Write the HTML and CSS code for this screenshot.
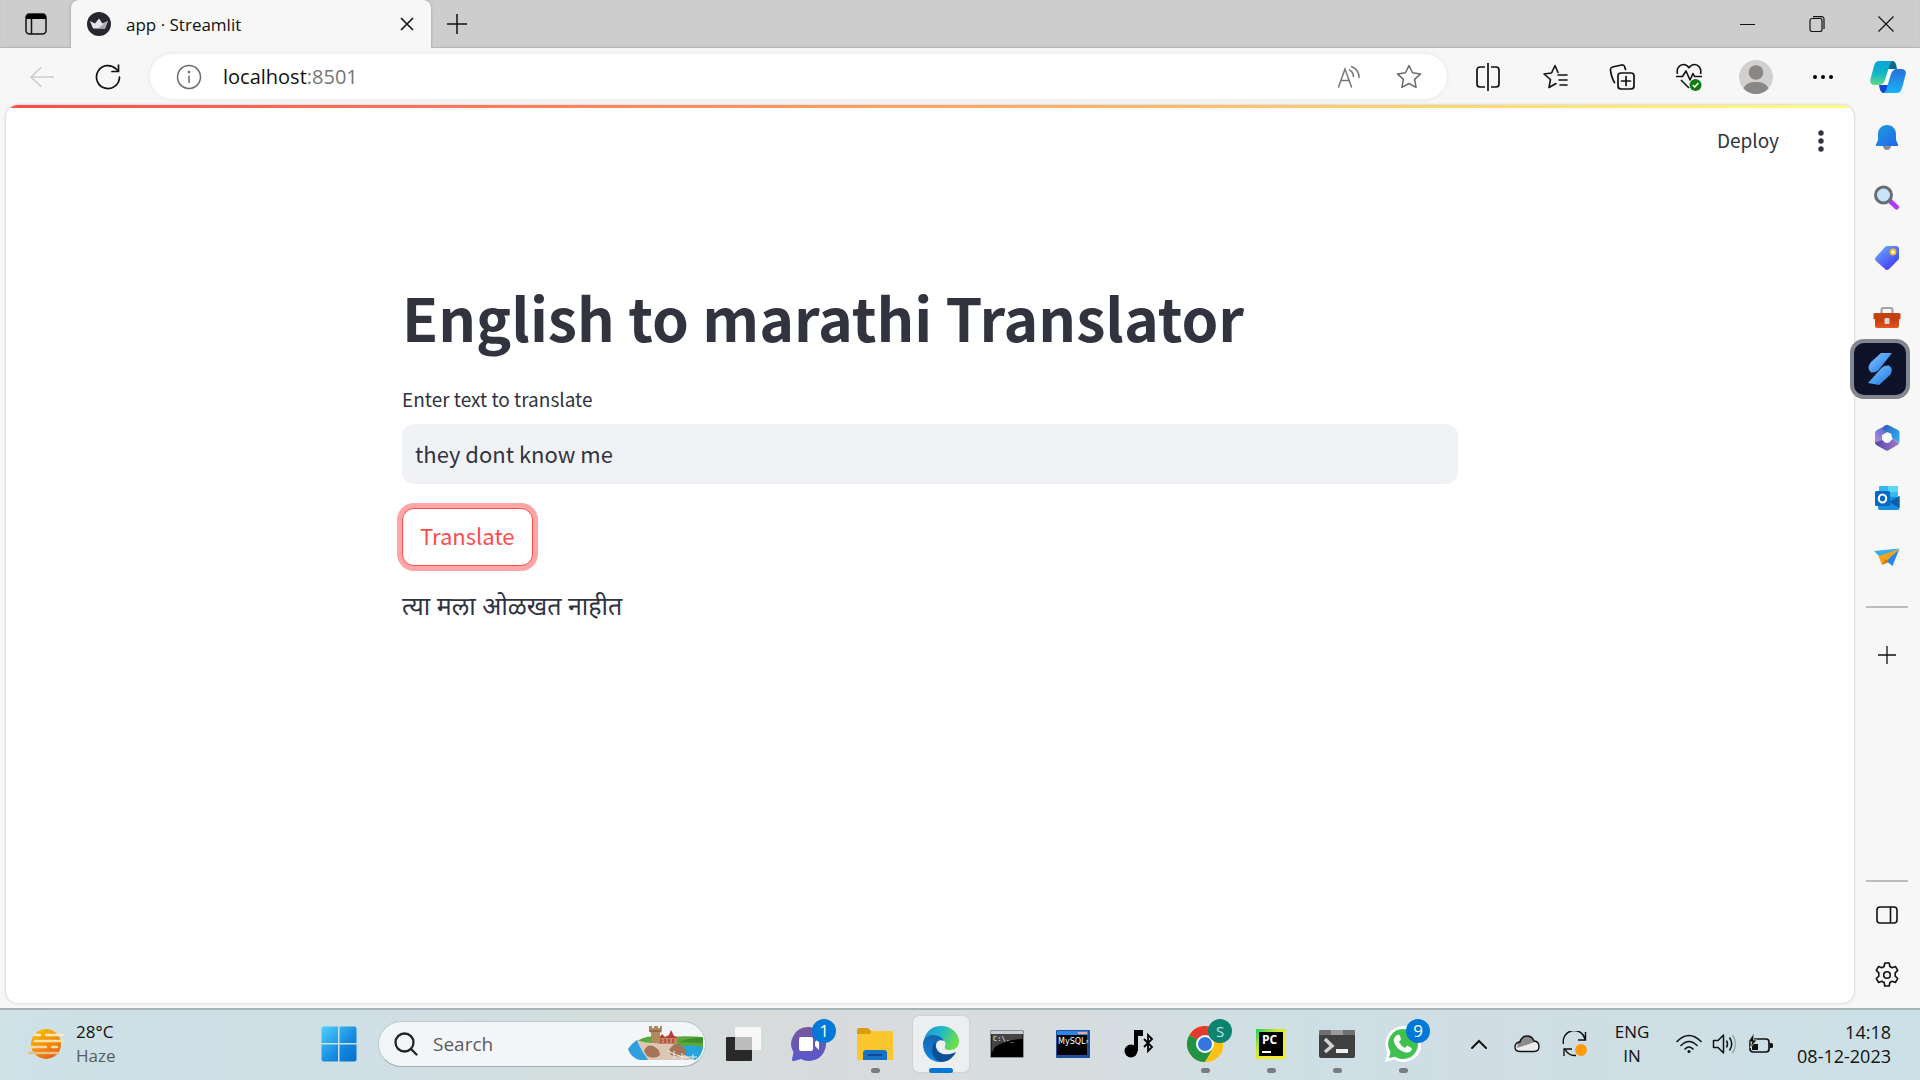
FILE: index.html
```html
<!DOCTYPE html>
<html lang="en">
<head>
<meta charset="utf-8">
<meta name="viewport" content="width=device-width, initial-scale=1">
<title>app · Streamlit</title>
<link rel="stylesheet" href="styles.css">
</head>
<body>
<div class="desktop">

  <header class="tabstrip">
    <button class="strip-btn workspaces" aria-label="Tab actions">
      <svg width="22" height="22" viewBox="0 0 22 22"><rect x="1" y="1" width="20" height="20" rx="3.500" fill="none" stroke="#111" stroke-width="1.500"/><path d="M1 6V4a3 3 0 0 1 3-3h14a3 3 0 0 1 3 3v2z" fill="#000"/><path d="M6.500 6v15" stroke="#111" stroke-width="1.500"/></svg>
    </button>
    <div class="tab">
      <svg width="24" height="24" viewBox="0 0 24 24"><circle cx="12" cy="12" r="12" fill="#262730"/><path d="M3 9l5 2.500 4-5 3.500 5L21 9l-3 7.500H6z" fill="#e4e4e6"/><path d="M6 16.500h12L20.500 9l-9 7z" fill="#a9a9ad"/></svg>
      <span class="tab-title">app · Streamlit</span>
      <button class="tab-close" aria-label="Close tab"><svg width="14" height="14" viewBox="0 0 14 14" fill="none" stroke="#111" stroke-width="1.600"><path d="M1 1l12 12M13 1L1 13"/></svg></button>
    </div>
    <button class="new-tab" aria-label="New tab"><svg width="22" height="22" viewBox="0 0 22 22" fill="none" stroke="#111" stroke-width="1.500"><path d="M11 1v20M1 11h20"/></svg></button>
    <div class="window-controls">
      <button aria-label="Minimize"><svg width="16" height="16" viewBox="0 0 16 16" stroke="#111"><path d="M0 8.500h15"/></svg></button>
      <button aria-label="Restore"><svg width="16" height="16" viewBox="0 0 16 16" fill="none" stroke="#111" stroke-width="1.200"><rect x="1" y="2.500" width="12" height="13" rx="2"/><path d="M4 .7h8.500a2.500 2.500 0 0 1 2.500 2.500V13"/></svg></button>
      <button aria-label="Close"><svg width="16" height="16" viewBox="0 0 16 16" fill="none" stroke="#111" stroke-width="1.200"><path d="M.5.500l15 15M15.500.500l-15 15"/></svg></button>
    </div>
  </header>

  <nav class="toolbar">
    <button class="nav-btn" aria-label="Back"><svg width="26" height="24" viewBox="0 0 26 24" fill="none" stroke="#cdcdcd" stroke-width="1.600"><path d="M25 12H2M12.500 2L2 12l10.500 10"/></svg></button>
    <button class="nav-btn" aria-label="Refresh"><svg width="26" height="26" viewBox="0 0 26 26" fill="none" stroke="#111" stroke-width="1.700" stroke-linecap="round"><path d="M24.500 13A11.500 11.500 0 1 1 21 4.800L23 7"/><path d="M23.500 1v6.500H17"/></svg></button>
    <div class="address">
      <svg width="26" height="26" viewBox="0 0 26 26" fill="none" stroke="#6b6b6b" stroke-width="1.500"><circle cx="13" cy="13" r="11.500"/><path d="M13 11.500V19"/><circle cx="13" cy="8" r=".6" fill="#6b6b6b"/></svg>
      <a class="url" href="#">localhost<span class="port">:8501</span></a>
      <button class="addr-btn" aria-label="Read aloud"><svg width="24" height="24" viewBox="0 0 24 24" fill="none" stroke="#777" stroke-width="1.500" stroke-linecap="round"><path d="M1.500 22L8 4l6.500 18M4 15.500h8M12.500 5c2.500 1.200 3.800 3.500 4 6.500M14.500 1.500c4.500 1.800 7.500 6 7.500 11"/></svg></button>
      <button class="addr-btn" aria-label="Favorite"><svg width="26" height="26" viewBox="0 0 26 26" fill="none" stroke="#6b6b6b" stroke-width="1.500" stroke-linejoin="round"><path d="M13 1.500l3.500 7.300 8 1.100-5.900 5.500 1.500 8L13 19.500l-7.100 3.900 1.500-8L1.500 9.900l8-1.100z"/></svg></button>
    </div>
    <div class="tools">
      <button aria-label="Split screen"><svg width="24" height="28" viewBox="0 0 24 28" fill="none" stroke="#111" stroke-width="1.700"><path d="M9 4H4a3 3 0 0 0-3 3v14a3 3 0 0 0 3 3h5M15 4h5a3 3 0 0 1 3 3v14a3 3 0 0 1-3 3h-5M12 0v28"/></svg></button>
      <button aria-label="Favorites"><svg width="26" height="26" viewBox="0 0 26 26" fill="none" stroke="#111" stroke-width="1.600" stroke-linejoin="round" stroke-linecap="round"><path d="M14 19.500l-7 4 1.500-8L2 10l7.500-1L13 1.500 16 8.500M16 11h9M17 16h8M18 21h7"/></svg></button>
      <button aria-label="Collections"><svg width="26" height="26" viewBox="0 0 26 26" fill="none" stroke="#111" stroke-width="1.700" stroke-linecap="round"><rect x="9" y="9" width="16" height="16" rx="3"/><path d="M17 12.500v9M12.500 17h9M5.500 18.500C3.500 15.500 1.500 9 1.500 5.500c0-1.500.8-2.200 2-2.500l9-2c1.800-.3 2.800.5 3.300 2l.7 2.500"/></svg></button>
      <button aria-label="Browser essentials"><svg width="26" height="28" viewBox="0 0 26 28" fill="none" stroke="#111" stroke-width="1.600" stroke-linejoin="round"><path d="M1.500 11C0 5 4 1.500 7.500 1.500c2.500 0 4 1 5.500 3.200C14.500 2.500 16 1.500 18.500 1.500 22 1.500 26 5 24.500 11M0 13.500h6.500L10 8l4 9 3-6.500 1.500 3H26M5 17l8 8"/><circle cx="19.500" cy="22" r="6" fill="#107c10" stroke="none"/><path d="M16.800 22l2 2 3.500-4" stroke="#fff"/></svg></button>
      <button aria-label="Profile"><svg width="34" height="34" viewBox="0 0 34 34"><circle cx="17" cy="17" r="17" fill="#d2d0ce"/><circle cx="17" cy="12.500" r="7.300" fill="#8a8886"/><path d="M4.500 28.500C6.500 23.500 11 22 17 22s10.500 1.500 12.500 6.500A17 17 0 0 1 17 34a17 17 0 0 1-12.500-5.500z" fill="#8a8886"/></svg></button>
      <button aria-label="Settings and more"><svg width="22" height="6" viewBox="0 0 22 6"><circle cx="3" cy="3" r="2"/><circle cx="11" cy="3" r="2"/><circle cx="19" cy="3" r="2"/></svg></button>
      <button class="copilot" aria-label="Copilot">
        <svg width="36" height="34" viewBox="0 0 36 34">
          <defs>
            <linearGradient id="cpA" x1="0" y1="0" x2="0" y2="1"><stop offset="0" stop-color="#0aa4dd"/><stop offset=".5" stop-color="#12b4c4"/><stop offset="1" stop-color="#5fd98a"/></linearGradient>
            <linearGradient id="cpB" x1="0" y1="0" x2="0" y2="1"><stop offset="0" stop-color="#2a6fd8"/><stop offset="1" stop-color="#16b4f8"/></linearGradient>
          </defs>
          <path d="M17 1h5c3 0 4 2 5 8h-9z" fill="#0b6a8e"/><path d="M19 33h-5c-3 0-4-2-5-8h9z" fill="#1746d1"/>
          <path d="M9 1h15c-3 0-4 2-5 6l-4 13c-1 3-3 5-6 5H5c-4 0-5.500-2.500-4.500-6L4 6c1-3.500 2.500-5 5-5z" fill="url(#cpA)"/>
          <path d="M27 33H12c3 0 4-2 5-6l4-13c1-3 3-5 6-5h4c4 0 5.500 2.500 4.500 6L32 28c-1 3.500-2.500 5-5 5z" fill="url(#cpB)"/>
          <path d="M19 10h4c-2 1-3 3-3.500 5L17 23c-.4 1.300-1.500 2-3.500 2 1-1 1.500-2 2-4z" fill="#fff"/>
        </svg>
      </button>
    </div>
  </nav>

  <div class="workspace">
    <main class="page">
      <div class="decoration"></div>
      <div class="page-bar">
        <button class="deploy">Deploy</button>
        <button class="kebab" aria-label="Main menu"><svg width="6" height="22" viewBox="0 0 6 22" fill="#31333f"><circle cx="3" cy="3" r="2.700"/><circle cx="3" cy="11" r="2.700"/><circle cx="3" cy="19" r="2.700"/></svg></button>
      </div>
      <section class="block">
        <h1>English to marathi Translator</h1>
        <label for="source">Enter text to translate</label>
        <input id="source" type="text" value="they dont know me">
        <button class="translate">Translate</button>
        <p class="result" lang="mr">त्या मला ओळखत नाहीत</p>
      </section>
    </main>

    <aside class="sidebar">
      <svg width="0" height="0" class="defs"><defs>
        <linearGradient id="blue" x1="0" y1="0" x2="1" y2="1"><stop offset="0" stop-color="#1ba0dc"/><stop offset="1" stop-color="#2563eb"/></linearGradient>
        <linearGradient id="tagG" x1="0" y1="0" x2=".7" y2="1"><stop offset="0" stop-color="#6bb5ff"/><stop offset="1" stop-color="#4338f5"/></linearGradient>
        <linearGradient id="red" x1="0" y1="0" x2="0" y2="1"><stop offset="0" stop-color="#a92d0a"/><stop offset="1" stop-color="#e8551c"/></linearGradient>
        <linearGradient id="sG" x1="0" y1="0" x2="1" y2="1"><stop offset="0" stop-color="#8cc8ff"/><stop offset="1" stop-color="#1473e6"/></linearGradient>
        <linearGradient id="m1" x1="1" y1="0" x2="0" y2="1"><stop offset="0" stop-color="#2d62c8"/><stop offset="1" stop-color="#c28be0"/></linearGradient>
        <linearGradient id="m2" x1="0" y1="0" x2="1" y2="1"><stop offset="0" stop-color="#2f5cc0"/><stop offset="1" stop-color="#30b9f0"/></linearGradient>
        <linearGradient id="m3" x1="0" y1="0" x2="1" y2="0"><stop offset="0" stop-color="#5146a8"/><stop offset="1" stop-color="#a678c8"/></linearGradient>
      </defs></svg>
      <div class="side-top">
        <button aria-label="Notifications"><svg width="24" height="26" viewBox="0 0 24 26"><path d="M8 21h8c-.5 3-2 4-4 4s-3.500-1-4-4z" fill="#8b8b8b"/><path d="M12 0c5.500 0 9 4 9 9v6l2 4.500c.3 1-.2 1.500-1 1.500H2c-.8 0-1.300-.5-1-1.500L3 15V9c0-5 3.500-9 9-9z" fill="url(#blue)"/></svg></button>
        <button aria-label="Search"><svg width="26" height="26" viewBox="0 0 26 26"><path d="M17 17l5.500 5" stroke="#b43cf0" stroke-width="5" stroke-linecap="round"/><circle cx="9.500" cy="10" r="8" fill="#c8e4fa" stroke="#6a6d6f" stroke-width="3"/></svg></button>
        <button aria-label="Shopping"><svg width="26" height="26" viewBox="0 0 26 26"><path d="M13 1h9q3 0 3 3v9q0 1-1 2l-9 9q-2 2-4 0l-9-8q-2-2 0-4l9-10q1-1 2-1z" fill="url(#tagG)"/><circle cx="19" cy="7" r="2.500" fill="#fff" stroke="#f4c020" stroke-width="1.800"/></svg></button>
        <button aria-label="Tools"><svg width="28" height="24" viewBox="0 0 28 24"><path d="M8.500 8V4q0-2 2-2h7q2 0 2 2v4" fill="none" stroke="#a0a3a6" stroke-width="2.200"/><rect x="2" y="8" width="24" height="14" rx="2" fill="url(#red)"/><path d="M.5 8.500q0-1.500 1.500-1.500h24q1.500 0 1.500 1.500V13q-6 2-13.500 2T.5 13z" fill="#c4400f"/><rect x="11.500" y="12" width="5" height="6" rx="1" fill="#d5d7d9"/></svg></button>
        <button aria-label="Microsoft 365" class="after-float"><svg width="26" height="28" viewBox="0 0 26 28"><path d="M13 1L3 6Q1 7 1 9v11l7-4v-5l9-5V3z" fill="url(#m1)"/><path d="M12 1q1-.6 2 0l10 5q1.500 1 1.500 3v10l-8-5v-4L9 6V3z" fill="url(#m2)"/><path d="M25 19q0 1-1.500 2L14 26.500q-1 .6-2 0L3 21.500Q1 20 1 18.500L8 16l5 3 6-4z" fill="url(#m3)"/><path d="M10.500 10h5l3 4-3 4.500h-5L8 14z" fill="#f7f7f7"/></svg></button>
        <button aria-label="Outlook"><svg width="26" height="26" viewBox="0 0 26 26"><rect x="5" y="1" width="19" height="15" rx="1" fill="#35b8f1"/><rect x="14" y="1" width="10" height="6" fill="#55d6fb"/><path d="M4 11l20 1 1.500-1v12q0 2-2 2H6q-2 0-2-2z" fill="#1490df"/><path d="M25.500 11v12L15 17z" fill="#0d5fa8"/><rect x="1" y="6" width="15" height="15" rx="1.500" fill="#0768c8"/><ellipse cx="8.500" cy="13.500" rx="3.700" ry="4" fill="none" stroke="#fff" stroke-width="2.200"/></svg></button>
        <button aria-label="Drop"><svg width="26" height="22" viewBox="0 0 26 22"><path d="M0 4L25.500 1.500 7 11z" fill="#35aef0"/><path d="M25.500 1.500L18.500 19 11 13z" fill="#2388ee"/><path d="M4.500 9L25.500 2 8 18z" fill="#f2a31c"/><path d="M8 18l3-6 4 3z" fill="#d77b07"/></svg></button>
        <hr>
        <button aria-label="Customize"><svg width="18" height="18" viewBox="0 0 18 18" stroke="#111" stroke-width="1.300"><path d="M9 0v18M0 9h18"/></svg></button>
      </div>
      <div class="side-bottom">
        <hr>
        <button aria-label="Hide sidebar"><svg width="22" height="18" viewBox="0 0 22 18" fill="none" stroke="#111" stroke-width="1.600"><rect x="1" y="1" width="20" height="16" rx="3"/><path d="M14.500 1v16"/></svg></button>
        <button aria-label="Settings"><svg width="26" height="26" viewBox="0 0 26 26" fill="none" stroke="#111" stroke-width="1.600" stroke-linejoin="round"><path d="M10.800 1h4.400l.7 3.500 2.200 1.200 3.400-1.100 2.200 3.800-2.500 2.400v3.400l2.500 2.300-2.200 3.900-3.400-1.200-2.200 1.300-.7 3.500h-4.400l-.7-3.500-2.200-1.300-3.400 1.200-2.200-3.900 2.500-2.300v-3.400L2.300 8.400l2.200-3.800 3.400 1.100 2.200-1.200z"/><circle cx="13" cy="13" r="3.300"/></svg></button>
      </div>
      <button class="floating" aria-label="Assistant"><svg width="26" height="34" viewBox="0 0 26 34"><path d="M14 1h11L12 17.500Q9 21 4 20.500-1 16 4 10z" fill="url(#sG)"/><path d="M12 33L1 31 14 16.500Q17 13 22 13.500q5 3.500 1 9.500z" fill="url(#sG)"/></svg></button>
    </aside>
  </div>

  <footer class="taskbar">
    <div class="weather">
      <svg width="36" height="32" viewBox="0 0 36 32"><defs><linearGradient id="sun" x1="0" y1="0" x2=".6" y2="1"><stop offset="0" stop-color="#ffc800"/><stop offset="1" stop-color="#e9650c"/></linearGradient></defs><circle cx="18" cy="16" r="15" fill="url(#sun)"/><g stroke-width="2.500" stroke-linecap="round"><path d="M7 7h5M18 7h17" stroke="#f7ecc8"/><path d="M7 13h28" stroke="#fbe3a8"/><path d="M1 19h17M24 19h5" stroke="#f6d9a4"/><path d="M1 25h29" stroke="#e3c08c"/></g></svg>
      <div class="weather-text"><span>28°C</span><span class="muted">Haze</span></div>
    </div>
    <button class="start" aria-label="Start"><svg width="36" height="36" viewBox="0 0 36 36"><defs><linearGradient id="win" x1="0" y1="0" x2="1" y2="1"><stop offset="0" stop-color="#4fd0ff"/><stop offset=".6" stop-color="#1489de"/><stop offset="1" stop-color="#0670cc"/></linearGradient></defs><path d="M2 .5h15V17H.5V2zM18.500.500H34L35.500 2v15h-17zM.5 18.500H17v17H2L.5 34zM18.500 18.500h17V34L34 35.500H18.500z" fill="url(#win)"/></svg></button>
    <div class="search">
      <svg width="24" height="24" viewBox="0 0 24 24" fill="none" stroke="#222" stroke-width="2.300" stroke-linecap="round"><circle cx="10.500" cy="10.500" r="9"/><path d="M17 17l5.500 5.500"/></svg>
      <input type="text" placeholder="Search" aria-label="Search">
      <svg width="76" height="36" viewBox="0 0 76 36">
        <path d="M10 15q12-7 24-3 20-3 42-1v12H34z" fill="#58a83a"/><path d="M52 16q14-5 24-4v5z" fill="#3d8f2e"/>
        <path d="M1 23q4-6 9-9 6 14 12 20H13Q4 32 1 23z" fill="#2f9fe0"/>
        <path d="M10 14q10 4 30 3l18 4q0 8 12 12l-10 1H21Q14 24 10 14z" fill="#dcc6b4"/>
        <path d="M53 21q10-3 23 0-1 9-8 13-12-3-15-13z" fill="#25a5dc"/>
        <path d="M22 3V0h3v2h2V0h4v2h2V0h2v5l-2 2v10H24V7l-2-2z" fill="#b08a5c"/><path d="M22 5h12" stroke="#6d5233"/>
        <path d="M32 12l3-4 3 3 4-2 2-5 3 6 3 1v7H32z" fill="#b83a30"/><path d="M31 12h19v6H31z" fill="#c98263"/><path d="M34 13v4M38 13v4M42 13v4M46 13v4" stroke="#8a3124"/>
        <path d="M17 25q3-7 9-5 7 3 7 9-5 5-13 1zM42 24q4-7 11-5 8 5 6 9-6 4-15 1z" fill="#a67458"/>
        <path d="M40 24l7 4 9 3h14M47 25v8M55 27v7M66 28v5" stroke="#eee" fill="none"/>
      </svg>
    </div>
    <div class="apps">
      <button aria-label="Task view"><svg width="36" height="36" viewBox="0 0 36 36"><rect x="1" y="11" width="26" height="24" rx="1" fill="#292929"/><rect x="10" y="1" width="26" height="23" rx="1" fill="#f7f7f7"/><path d="M10 11h17v13H10z" fill="#bcbcbc"/></svg></button>
      <button aria-label="Chat"><svg width="36" height="36" viewBox="0 0 36 36"><defs><linearGradient id="chat" x1="0" y1="0" x2="0" y2="1"><stop offset="0" stop-color="#7a559c"/><stop offset="1" stop-color="#5759cf"/></linearGradient></defs><path d="M18 1a17 17 0 1 1-8 32l-7 2q-2 .5-2-1.500l1.500-7A17 17 0 0 1 18 1z" fill="url(#chat)"/><rect x="8" y="11" width="14" height="14" rx="2" fill="#fff"/><path d="M24 16l4-4v12l-4-4z" fill="#fff"/></svg><span class="badge">1</span></button>
      <button aria-label="File Explorer" class="running"><svg width="36" height="34" viewBox="0 0 36 34"><path d="M0 3q0-2 2-2h9l4 4v4H0z" fill="#dd9a0a"/><path d="M0 7h12l4-3h19q1 0 1 1v28H0z" fill="#fcc62f"/><path d="M6 33v-7q0-3 3-3h18q3 0 3 3v7z" fill="#1672c4"/><path d="M11 28h14" stroke="#0d4c90" stroke-width="2"/></svg></button>
      <button aria-label="Microsoft Edge" class="active"><svg width="36" height="36" viewBox="0 0 36 36"><defs><linearGradient id="edA" x1="0" y1="0" x2="1" y2=".4"><stop offset="0" stop-color="#1a8fdb"/><stop offset=".5" stop-color="#20b8cc"/><stop offset="1" stop-color="#6bdc4a"/></linearGradient><linearGradient id="edB" x1="0" y1="0" x2="0" y2="1"><stop offset="0" stop-color="#1464b0"/><stop offset="1" stop-color="#1388e0"/></linearGradient></defs><path d="M1 15C2 6 9 0 18 0c11 0 18 8 18 15 0 6-4 9-9 9-4 0-6-1-5-4 2-3-1-8-8-8-5 0-10 1-13 3z" fill="url(#edA)"/><path d="M0 18c0-6 5-9 10-9 6 0 10 3 11 6-4-2-8 0-8 5 0 7 8 11 15 9-3 5-7 7-11 7C7 36 0 28 0 18z" fill="url(#edB)"/><path d="M13 15c-3 11 8 17 20 11-3 6-8 10-15 10-9-2-12-14-5-21z" fill="#0c4f94"/></svg></button>
      <button aria-label="Command Prompt"><svg width="34" height="28" viewBox="0 0 34 28"><rect x=".5" y=".5" width="33" height="27" rx="1" fill="#000" stroke="#8c9299"/><path d="M1 1h32v3H1z" fill="#c9ced4"/><path d="M1.500 4h31v5Q15 10 5 17l-3.500 6z" fill="#444"/><text x="3" y="11" class="cmd-text">C:\._</text></svg></button>
      <button aria-label="MySQL"><svg width="36" height="30" viewBox="0 0 36 30"><rect x="1" y="1" width="34" height="28" rx="1" fill="#1e4e9c"/><path d="M2 2h31v4H2z" fill="#2f86e8"/><path d="M23 3h9v2h-9z" fill="#e0a9a0"/><path d="M2 6h30v20H2z" fill="#000"/><text x="3" y="15" class="sql-text">MySQL›</text></svg></button>
      <button aria-label="Bluetooth audio"><svg width="30" height="30" viewBox="0 0 30 30"><circle cx="7" cy="22" r="6.500"/><path d="M10 1h9v6h-5v15h-4z"/><path d="M20 10l8 8-4 4V6l4 4-8 8" fill="none" stroke="#000" stroke-width="1.800"/></svg></button>
      <button aria-label="Chrome" class="running"><svg width="36" height="36" viewBox="0 0 36 36"><circle cx="18" cy="18" r="18" fill="#fbc116"/><path d="M18 18L2.400 9A18 18 0 0 1 33.600 9z" fill="#e33b2e"/><path d="M18 18l7.800 4.500L18 36A18 18 0 0 1 2.400 9z" fill="#229342"/><path d="M18 9.500h16.500A18 18 0 0 1 18 36l8-13z" fill="#fbc116"/><circle cx="18" cy="18" r="9" fill="#fff"/><circle cx="18" cy="18" r="7" fill="#3475e0"/></svg><span class="badge green">S</span></button>
      <button aria-label="PyCharm" class="running"><svg width="30" height="30" viewBox="0 0 30 30"><defs><linearGradient id="pc" x1="0" y1="0" x2=".6" y2=".6"><stop offset="0" stop-color="#16d05e"/><stop offset=".6" stop-color="#c5e82e"/><stop offset="1" stop-color="#f0ee2a"/></linearGradient></defs><path d="M0 0h30v30H0z" fill="url(#pc)"/><path d="M3 3h24v24H3z" fill="#000"/><text x="6" y="15" class="pc-text">PC</text><path d="M6 22h9v2H6z" fill="#fff"/></svg></button>
      <button aria-label="Terminal" class="running"><svg width="36" height="28" viewBox="0 0 36 28"><rect width="36" height="28" rx="2" fill="#404040"/><path d="M2 0h10v5H0V2q0-2 2-2z" fill="#707070"/><path d="M12 0h12v5H12z" fill="#9b9b9b"/><path d="M24 0h10q2 0 2 2v3H24z" fill="#707070"/><path d="M6 9l7 7-7 6" fill="none" stroke="#d2d2d2" stroke-width="3.500"/><path d="M17 19h12v4H17z" fill="#efefef"/></svg></button>
      <button aria-label="WhatsApp" class="running"><svg width="36" height="36" viewBox="0 0 36 36"><path d="M18 0a18 18 0 1 1-8.500 33.500L0 36l2.500-9.500A18 18 0 0 1 18 0z" fill="#fff"/><path d="M18 3a15 15 0 1 1-8 27.700L4 32l1.500-6A15 15 0 0 1 18 3z" fill="#3fc04f"/><path d="M12 9q2-1 3 1l1 3q0 1-2 3 2 4 6 6 2-3 3-2l3.500 2q1 1-.5 3-2.500 2.500-7 1-8-3-10-10-1-4 3-7z" fill="#fff"/></svg><span class="badge">9</span></button>
    </div>
    <div class="tray">
      <button class="wide" aria-label="Show hidden icons"><svg width="16" height="10" viewBox="0 0 16 10" fill="none" stroke="#111" stroke-width="2" stroke-linecap="round"><path d="M1 9l7-7 7 7"/></svg></button>
      <button class="wide" aria-label="OneDrive"><svg width="26" height="18" viewBox="0 0 26 18"><path d="M6 16.500q-5 0-5-4.500t5-5Q8 1 13 1t7 5q5 .5 5 5.500t-5 5z" fill="#ededed"/><path d="M4 7.500Q8 1 13 1t7 5l1 1L3 13z" fill="#8c8c8c"/><path d="M6 16.500q-5 0-5-4.500t5-5Q8 1 13 1t7 5q5 .5 5 5.500t-5 5z" fill="none" stroke="#111" stroke-width="1.400"/></svg></button>
      <button class="wide" aria-label="Windows Update"><svg width="26" height="26" viewBox="0 0 26 26" fill="none" stroke="#111" stroke-width="1.400"><path d="M1.500 13A11 11 0 0 1 23 8M23.500 1v8H16M14 24.500A11 11 0 0 1 3 18M2 25v-7h8"/><circle cx="19" cy="19" r="6" fill="#ff9a0a" stroke="none"/></svg></button>
      <div class="lang"><span>ENG</span><span>IN</span></div>
      <button aria-label="Network"><svg width="26" height="20" viewBox="0 0 26 20" fill="none" stroke="#111" stroke-width="1.600" stroke-linecap="round"><path d="M1 7.500q12-12 24 0M5 11.500q8-8 16 0M9 15q4-4 8 0"/><circle cx="13" cy="17.500" r="1.500" fill="#111" stroke="none"/></svg></button>
      <button aria-label="Volume"><svg width="26" height="22" viewBox="0 0 26 22" fill="none" stroke="#111" stroke-width="1.500" stroke-linejoin="round"><path d="M1.500 7.500H6L11.500 2v18L6 14.500H1.500z"/><path d="M14.500 7.500q2 3.500 0 7M17.500 4.500q4.500 6.500 0 13"/><path d="M20.500 2q6 9 0 18" stroke="#9aa"/></svg></button>
      <button aria-label="Battery"><svg width="26" height="22" viewBox="0 0 26 22"><rect x="2" y="6" width="19" height="13" rx="3" fill="none" stroke="#111" stroke-width="1.700"/><path d="M4 17v-6h6v6z" fill="#111"/><path d="M22 10h1.500q1.500 0 1.500 1.500v2q0 1.500-1.500 1.500H22z" fill="#111"/><path d="M6 0L0 9h4l-2 6 7-8H5.500z" fill="#111" stroke="#cde0e7" stroke-width=".7"/></svg></button>
      <div class="clock"><span>14:18</span><span>08-12-2023</span></div>
    </div>
  </footer>
</div>
</body>
</html>
```
FILE: styles.css
```css
* { box-sizing: border-box; }

body {
  margin: 0;
  font-family: "Open Sans", "Noto Sans", sans-serif;
  color: #111;
}

button {
  display: flex;
  align-items: center;
  justify-content: center;
  padding: 0;
  border: 0;
  background: none;
  font: inherit;
  color: inherit;
}

svg { display: block; flex: none; }

.desktop {
  display: flex;
  flex-direction: column;
  min-height: 100vh;
  background: #f7f7f7;
}

/* Tab strip */
.tabstrip {
  display: flex;
  height: 48px;
  background: #cdcdcd;
  box-shadow: inset 0 -1px 1px #b4b4b4;
}
.strip-btn { width: 71px; }
.tab {
  display: flex;
  align-items: center;
  width: 360px;
  padding: 0 16px;
  background: #f7f7f7;
  border-radius: 8px 8px 0 0;
  box-shadow: 0 0 3px #999;
  clip-path: inset(0 -3px 0 -3px);
}
.tab-title {
  flex: 1;
  margin-left: 15px;
  font-size: 17px;
}
.tab-close { width: 16px; }
.new-tab { width: 52px; }
.window-controls {
  display: flex;
  margin-left: auto;
}
.window-controls button { width: 69px; }

/* Address toolbar */
.toolbar {
  display: flex;
  align-items: center;
  height: 57px;
  padding-left: 9px;
}
.nav-btn { width: 66px; height: 44px; }
.address {
  display: flex;
  flex: 1;
  align-items: center;
  height: 45px;
  margin: 0 7px 0 9px;
  padding: 0 8px 0 26px;
  background: #fff;
  border-radius: 23px;
  box-shadow: 0 0 5px #e4e4e4;
}
.url {
  flex: 1;
  margin-left: 21px;
  padding-bottom: 1px;
  font-size: 20px;
  color: #111;
  text-decoration: none;
}
.port { color: #757575; }
.addr-btn { width: 60px; }
.tools { display: flex; }
.tools button { width: 67px; height: 44px; }
.tools .copilot { width: 64px; }

/* Web page */
.workspace {
  display: flex;
  flex: 1;
}
.page {
  flex: 1;
  margin: 0 0 5px 6px;
  overflow: hidden;
  background: #fff;
  border-radius: 12px;
  box-shadow: 0 0 3px #bbb;
  font-family: "Noto Sans CJK SC", sans-serif;
  color: #31333f;
}
.decoration {
  height: 3px;
  background: linear-gradient(90deg, #ff4b4b, #fffd80);
}
.page-bar {
  display: flex;
  align-items: center;
  justify-content: flex-end;
  gap: 39px;
  height: 66px;
  padding-right: 30px;
}
.deploy { padding-bottom: 3px; font-size: 19px; }
.block {
  display: flex;
  flex-direction: column;
  align-items: flex-start;
  max-width: 1056px;
  margin: 0 auto;
  padding-top: 103px;
}
h1 {
  margin: 0;
  font-size: 59px;
  font-weight: 700;
  line-height: 80px;
}
label {
  margin-top: 28px;
  font-size: 19px;
  line-height: 28px;
}
#source {
  width: 100%;
  height: 60px;
  margin-top: 11px;
  padding: 0 13px 3px;
  border: 0;
  border-radius: 12px;
  background: #f0f2f6;
  font: inherit;
  font-size: 22px;
  color: inherit;
}
.translate {
  height: 58px;
  margin-top: 24px;
  padding: 0 17px 4px;
  border: 1px solid #ff4b4b;
  border-radius: 12px;
  background: #fff;
  box-shadow: 0 0 0 5px #ffa5a5;
  font-size: 22px;
  color: #ff4b4b;
}
.result {
  margin: 20px 0 0;
  font-family: "Noto Sans", "Noto Sans Devanagari", sans-serif;
  font-size: 25px;
  line-height: 38px;
}

/* Edge sidebar */
.sidebar {
  position: relative;
  display: flex;
  flex-direction: column;
  justify-content: space-between;
  width: 66px;
}
.defs { position: absolute; }
.side-top, .side-bottom {
  display: flex;
  flex-direction: column;
}
.side-top { padding-top: 3px; }
.side-bottom { padding-bottom: 3px; }
.sidebar button { height: 60px; }
.sidebar .after-float { margin-top: 60px; }
hr {
  width: 42px;
  height: 2px;
  margin: 18px auto 17px;
  border: 0;
  background: #bdbdbd;
}
.side-bottom hr { margin: 0 auto 3px; }
.sidebar .floating {
  position: absolute;
  top: 234px;
  left: -4px;
  width: 60px;
  height: 60px;
  border: 4px solid #83858f;
  border-radius: 14px;
  background: #0d1228;
}

/* Taskbar */
.taskbar {
  display: flex;
  align-items: center;
  height: 72px;
  padding-bottom: 2px;
  border-top: 2px solid #a5b2b6;
  background: linear-gradient(90deg, #cde1e7 0, #cfdfe6 18%, #d4dedc 32%, #d8dbdd 43%, #d7dddf 56%, #cddfe5 68%, #d0dde4 77%, #cbe1e7 100%);
}
.weather {
  display: flex;
  align-items: center;
  gap: 12px;
  width: 311px;
  padding-left: 28px;
}
.weather-text, .lang, .clock {
  display: flex;
  flex-direction: column;
  font-size: 17px;
  line-height: 24px;
}
.muted { color: #565d60; }
.start { width: 56px; }
.search {
  display: flex;
  align-items: center;
  width: 328px;
  height: 46px;
  margin: 0 4px 0 11px;
  padding: 0 2px 0 15px;
  border: 1px solid #bcc8cc;
  border-bottom-color: #a0adb1;
  border-radius: 23px;
  background: #f3f6f8;
}
.search input {
  flex: 1;
  min-width: 0;
  padding: 0 0 0 15px;
  border: 0;
  background: none;
  font: inherit;
  font-size: 19px;
}
.search input::placeholder { color: #5b5b5b; }
.apps { display: flex; }
.apps button {
  position: relative;
  width: 56px;
  height: 56px;
  margin: 0 5px;
}
.apps .active {
  border-radius: 6px;
  background: #eceeef;
  box-shadow: 0 0 2px #bbb;
}
.running::after, .active::after {
  content: "";
  position: absolute;
  bottom: -1px;
  width: 9px;
  height: 5px;
  border-radius: 3px;
  background: #777d80;
}
.active::after { width: 24px; background: #0078d7; }
.badge {
  position: absolute;
  top: 3px;
  right: 1px;
  width: 24px;
  height: 24px;
  border-radius: 50%;
  background: #0078d7;
  color: #fff;
  font-size: 17px;
  line-height: 24px;
}
.green { background: #0c8270; color: #c8e6dd; font-size: 15px; }
.cmd-text { font: 7px "DejaVu Sans Mono", monospace; fill: #eee; }
.sql-text { font: 8px "DejaVu Sans", sans-serif; fill: #fff; }
.pc-text { font: bold 12px "Open Sans", sans-serif; fill: #fff; }
.tray {
  display: flex;
  align-items: center;
  margin-left: auto;
  padding-right: 29px;
}
.tray button { width: 36px; height: 44px; }
.tray .wide { width: 48px; }
.lang { align-items: center; width: 66px; margin-right: 6px; }
.clock { align-items: flex-end; width: 112px; font-size: 18px; }
```
